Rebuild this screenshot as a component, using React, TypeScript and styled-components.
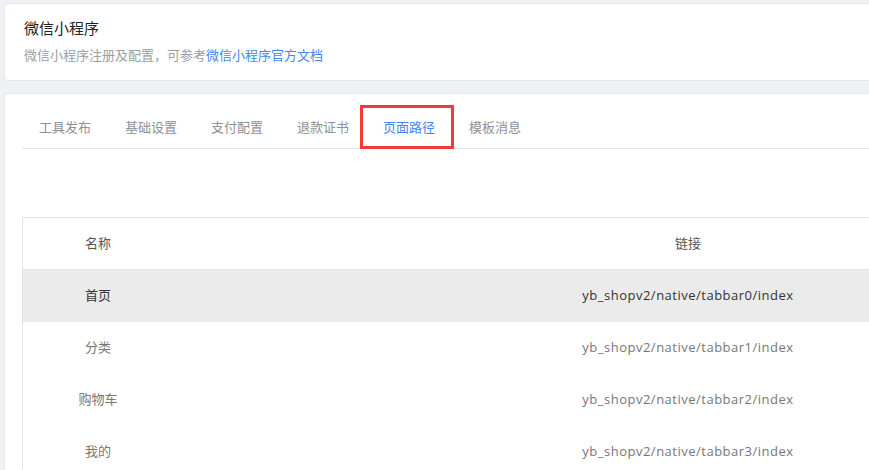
import React from "react";
import styled, { createGlobalStyle } from "styled-components";

const GlobalStyle = createGlobalStyle`
  html, body {
    margin: 0;
    padding: 0;
    background: #f0f1f4;
    overflow: hidden;
    font-family: "Open Sans", "Noto Sans CJK SC", sans-serif;
  }
`;

const Page = styled.div`
  width: 1240px;
  padding: 3px 0 0 4px;
  display: flex;
  flex-direction: column;
  gap: 12px;
`;

const Card = styled.div`
  background: #fff;
  border: 1px solid #e6e7eb;
  border-radius: 4px;
  box-sizing: border-box;
`;

const HeadCard = styled(Card)`
  height: 78px;
  padding: 13px 19px 0;
`;

const Title = styled.div`
  font-size: 15px;
  line-height: 22px;
  color: #222;
  font-family: "Noto Sans CJK SC", sans-serif;
`;

const Sub = styled.div`
  margin-top: 7px;
  font-size: 13px;
  line-height: 18px;
  color: #9b9ea4;
  font-family: "Noto Sans CJK SC", sans-serif;
`;

const DocLink = styled.a`
  color: #3f87f5;
  text-decoration: none;
`;

const BodyCard = styled(Card)`
  padding: 11px 0 0 17px;
  height: 400px;
`;

const TabBar = styled.div`
  display: flex;
  border-bottom: 1px solid #e4e6ea;
`;

const Tab = styled.div<{ $active?: boolean }>`
  position: relative;
  height: 43px;
  line-height: 43px;
  padding: 0 17px;
  font-size: 13px;
  font-family: "Noto Sans CJK SC", sans-serif;
  color: ${(p) => (p.$active ? "#3f87f5" : "#8d9098")};
`;

const Marker = styled.span`
  position: absolute;
  left: -6px;
  right: -2px;
  top: 0;
  bottom: -1px;
  border: 3px solid #f53a3a;
`;

const Table = styled.div`
  margin-top: 68px;
  width: 1180px;
  border-top: 1px solid #e3e4e8;
  border-left: 1px solid #e3e4e8;
`;

const Row = styled.div<{ $head?: boolean; $hover?: boolean }>`
  display: grid;
  grid-template-columns: 150px 1030px;
  box-sizing: border-box;
  height: 52px;
  padding-bottom: 3px;
  align-items: center;
  text-align: center;
  font-size: 13px;
  background: ${(p) => (p.$hover ? "#ebebeb" : "#fff")};
  color: ${(p) => (p.$hover ? "#333" : p.$head ? "#555" : "#777")};
  border-bottom: ${(p) => (p.$head ? "1px solid #e3e4e8" : "none")};
`;

const NameCell = styled.div`
  font-family: "Noto Sans CJK SC", sans-serif;
`;

const PathCell = styled.div`
  font-family: "Open Sans", "Noto Sans CJK SC", sans-serif;
  letter-spacing: 0.5px;
`;

const tabs = ["工具发布", "基础设置", "支付配置", "退款证书", "页面路径", "模板消息"];

const pages = [
  { name: "首页", path: "yb_shopv2/native/tabbar0/index" },
  { name: "分类", path: "yb_shopv2/native/tabbar1/index" },
  { name: "购物车", path: "yb_shopv2/native/tabbar2/index" },
  { name: "我的", path: "yb_shopv2/native/tabbar3/index" },
];

const App = () => {
  return (
    <Page>
      <GlobalStyle />
      <HeadCard>
        <Title>微信小程序</Title>
        <Sub>
          微信小程序注册及配置，可参考<DocLink>微信小程序官方文档</DocLink>
        </Sub>
      </HeadCard>
      <BodyCard>
        <TabBar>
          {tabs.map((t) => (
            <Tab key={t} $active={t === "页面路径"}>
              {t}
              {t === "页面路径" && <Marker />}
            </Tab>
          ))}
        </TabBar>
        <Table>
          <Row $head>
            <NameCell>名称</NameCell>
            <NameCell>链接</NameCell>
          </Row>
          {pages.map((p, i) => (
            <Row key={p.path} $hover={i === 0}>
              <NameCell>{p.name}</NameCell>
              <PathCell>{p.path}</PathCell>
            </Row>
          ))}
        </Table>
      </BodyCard>
    </Page>
  );
};

export default App;
